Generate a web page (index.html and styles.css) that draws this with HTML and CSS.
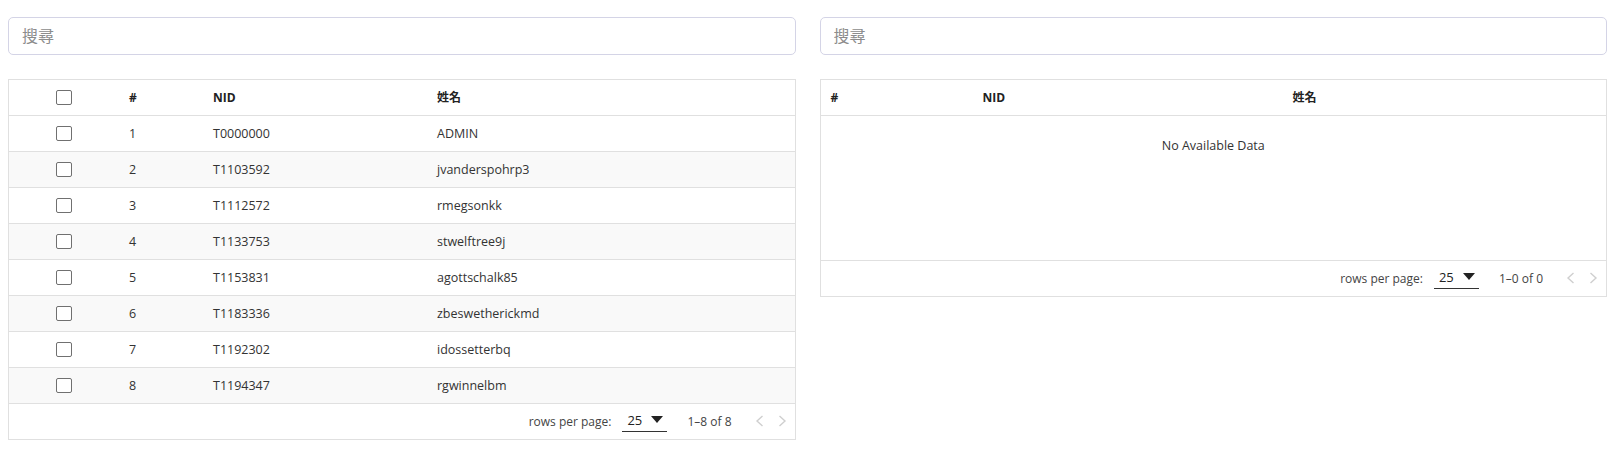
FILE: index.html
```html
<!DOCTYPE html>
<html lang="zh-Hant">
<head>
<meta charset="utf-8">
<title>Users</title>
<link rel="stylesheet" href="styles.css">
</head>
<body>
<div class="page">
  <section class="col">
    <input class="search" type="text" placeholder="搜尋">
    <div class="card">
      <table class="grid grid-left">
        <colgroup><col class="c-chk"><col class="c-num"><col class="c-nid"><col></colgroup>
        <thead>
          <tr><th class="chk"><span class="box"></span></th><th>#</th><th>NID</th><th>姓名</th></tr>
        </thead>
        <tbody>
          <tr><td class="chk"><span class="box"></span></td><td>1</td><td>T0000000</td><td>ADMIN</td></tr>
          <tr><td class="chk"><span class="box"></span></td><td>2</td><td>T1103592</td><td>jvanderspohrp3</td></tr>
          <tr><td class="chk"><span class="box"></span></td><td>3</td><td>T1112572</td><td>rmegsonkk</td></tr>
          <tr><td class="chk"><span class="box"></span></td><td>4</td><td>T1133753</td><td>stwelftree9j</td></tr>
          <tr><td class="chk"><span class="box"></span></td><td>5</td><td>T1153831</td><td>agottschalk85</td></tr>
          <tr><td class="chk"><span class="box"></span></td><td>6</td><td>T1183336</td><td>zbeswetherickmd</td></tr>
          <tr><td class="chk"><span class="box"></span></td><td>7</td><td>T1192302</td><td>idossetterbq</td></tr>
          <tr><td class="chk"><span class="box"></span></td><td>8</td><td>T1194347</td><td>rgwinnelbm</td></tr>
        </tbody>
      </table>
      <div class="footer">
        <span class="label">rows per page:</span>
        <span class="select"><span>25</span><svg width="12" height="7" viewBox="0 0 12 7"><path d="M0 0h12L6 7z" fill="#222"/></svg></span>
        <span class="range">1–8 of 8</span>
        <span class="nav">
          <svg width="9" height="12" viewBox="0 0 9 12"><path d="M7.5 1L2 6l5.5 5" fill="none" stroke="#cfcfcf" stroke-width="1.4"/></svg>
          <svg width="9" height="12" viewBox="0 0 9 12"><path d="M1.5 1L7 6l-5.5 5" fill="none" stroke="#cfcfcf" stroke-width="1.4"/></svg>
        </span>
      </div>
    </div>
  </section>
  <section class="col">
    <input class="search" type="text" placeholder="搜尋">
    <div class="card">
      <table class="grid grid-right">
        <colgroup><col class="r-num"><col class="r-nid"><col></colgroup>
        <thead>
          <tr><th>#</th><th>NID</th><th>姓名</th></tr>
        </thead>
        <tbody>
          <tr class="empty"><td colspan="3">No Available Data</td></tr>
        </tbody>
      </table>
      <div class="footer">
        <span class="label">rows per page:</span>
        <span class="select"><span>25</span><svg width="12" height="7" viewBox="0 0 12 7"><path d="M0 0h12L6 7z" fill="#222"/></svg></span>
        <span class="range">1–0 of 0</span>
        <span class="nav">
          <svg width="9" height="12" viewBox="0 0 9 12"><path d="M7.5 1L2 6l5.5 5" fill="none" stroke="#cfcfcf" stroke-width="1.4"/></svg>
          <svg width="9" height="12" viewBox="0 0 9 12"><path d="M1.5 1L7 6l-5.5 5" fill="none" stroke="#cfcfcf" stroke-width="1.4"/></svg>
        </span>
      </div>
    </div>
  </section>
</div>
</body>
</html>
```

FILE: styles.css
```css
* { box-sizing: border-box; }
html, body { margin: 0; background: #fff; }
body {
  font-family: "Open Sans", "Noto Sans CJK TC", sans-serif;
  color: #222;
}
.page {
  display: grid;
  grid-template-columns: 1fr 1fr;
  column-gap: 24px;
  padding: 17px 15px 0 8px;
  align-items: start;
}
.col { display: flex; flex-direction: column; gap: 24px; }
.search {
  display: block;
  width: 100%;
  height: 38px;
  border: 1px solid #d4d4e6;
  border-radius: 5px;
  padding: 0 13px;
  font-family: "Open Sans", "Noto Sans CJK TC", sans-serif;
  font-size: 16px;
  color: #333;
  outline: none;
  background: #fff;
}
.search::placeholder { color: #8c8c8c; }
.card { border: 1px solid #e0e0e0; background: #fff; }
.grid {
  width: 100%;
  border-collapse: collapse;
  table-layout: fixed;
  font-size: 12px;
}
.grid th, .grid td {
  height: 36px;
  padding: 0 12px;
  text-align: left;
  border-bottom: 1px solid #e0e0e0;
  white-space: nowrap;
}
.grid thead th { font-weight: 700; color: #222; height: 35px; }
.grid td { color: #333; font-size: 12.5px; }
.grid tbody tr:nth-child(even) td { background: #f9f9f9; }
.c-chk { width: 108px; }
.c-num { width: 84px; }
.c-nid { width: 224px; }
.grid .chk { padding: 0 0 0 47px; }
.box {
  display: block;
  width: 16px;
  height: 15px;
  border: 1.5px solid #707070;
  border-radius: 2px;
  background: #fff;
}
.r-num { width: 150px; }
.r-nid { width: 310px; }
.grid-right th:first-child { padding-left: 10px; }
.grid-right .empty td {
  height: 145px;
  text-align: center;
  vertical-align: top;
  padding-top: 21px;
  background: #fff;
  color: #333;
}
.footer {
  height: 35px;
  display: flex;
  justify-content: flex-end;
  align-items: center;
  padding-right: 8px;
  font-size: 12px;
  color: #444;
}
.label { margin-right: 11px; }
.select {
  display: flex;
  align-items: center;
  gap: 9px;
  width: 45px;
  height: 24px;
  padding-left: 5px;
  border-bottom: 1px solid #333;
  font-size: 13px;
  color: #222;
  margin-top: -2px;
}
.range { margin-left: 20px; margin-right: 23px; }
.nav { display: flex; gap: 14px; align-items: center; }
.nav svg { display: block; }
```
